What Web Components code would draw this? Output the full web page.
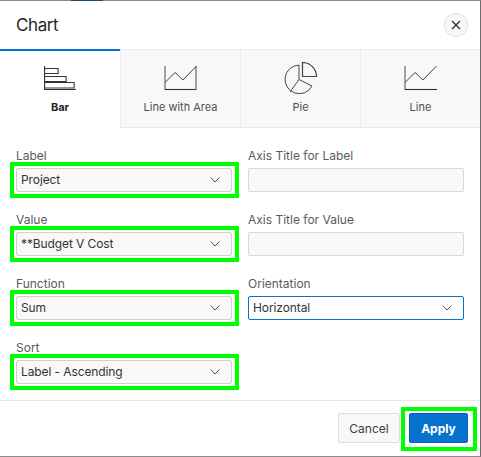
<!DOCTYPE html>
<html>
<head>
<meta charset="utf-8">
<title>Chart</title>
<style>
  html, body { margin: 0; padding: 0; background: #fff; }
  body { font-family: Inter, "Liberation Sans", sans-serif; }
</style>
</head>
<body>
<chart-dialog heading="Chart">
  <chart-tab slot="tabs" label="Bar" active>
    <svg width="34" height="32" viewBox="0 0 34 32" fill="none" stroke="#333" stroke-width="1.1">
      <path d="M.6 4v24M0 27.500h32"/>
      <path d="M.6 6.500h13.500v5H.6M.6 14.500h21.500v5H.6M.6 20.500h29.500v5.500H.6"/>
    </svg>
  </chart-tab>
  <chart-tab slot="tabs" label="Line with Area">
    <svg width="34" height="32" viewBox="0 0 34 32" fill="none">
      <path d="M1 4v24M32 4v24" stroke="#8a8a8a" stroke-width="1.600"/>
      <path d="M1 27.500h31" stroke="#333" stroke-width="1.100"/>
      <path d="M1 20.500l10-10 8 7.500L32.500 4" stroke="#444" stroke-width="1"/>
    </svg>
  </chart-tab>
  <chart-tab slot="tabs" label="Pie">
    <svg width="34" height="32" viewBox="0 0 34 32" fill="none" stroke="#444" stroke-width="1">
      <path d="M15 3.100A14.300 14.300 0 1 0 28 24L15 17.500z"/>
      <path d="M15 17.500L6 30"/>
      <path d="M18.500.500A14 14 0 0 1 32.500 14.500H18.500z" stroke-width="1.200"/>
    </svg>
  </chart-tab>
  <chart-tab slot="tabs" label="Line">
    <svg width="34" height="32" viewBox="0 0 34 32" fill="none">
      <path d="M1 4v24" stroke="#8a8a8a" stroke-width="1.600"/>
      <path d="M1 27.500h32" stroke="#333" stroke-width="1.100"/>
      <path d="M1 20.500l10-10 8 7.500L32.500 4" stroke="#444" stroke-width="1"/>
    </svg>
  </chart-tab>

  <chart-field slot="form" label="Label"><chart-select value="Project" highlight></chart-select></chart-field>
  <chart-field slot="form" label="Axis Title for Label"><chart-input></chart-input></chart-field>
  <chart-field slot="form" label="Value"><chart-select value="**Budget V Cost" highlight></chart-select></chart-field>
  <chart-field slot="form" label="Axis Title for Value"><chart-input></chart-input></chart-field>
  <chart-field slot="form" label="Function"><chart-select value="Sum" highlight></chart-select></chart-field>
  <chart-field slot="form" label="Orientation"><chart-select value="Horizontal" focused></chart-select></chart-field>
  <chart-field slot="form" label="Sort"><chart-select value="Label - Ascending" highlight></chart-select></chart-field>

  <chart-button slot="footer" style="width:62px">Cancel</chart-button>
  <chart-button slot="footer" style="width:59px" primary highlight>Apply</chart-button>
</chart-dialog>

<script>
class ChartDialog extends HTMLElement {
  constructor() {
    super();
    this.attachShadow({ mode: 'open' });
    this.shadowRoot.innerHTML = `
      <style>
        :host {
          display: flex;
          flex-direction: column;
          position: relative;
          box-sizing: border-box;
          width: 481px;
          height: 457px;
          background: #fff;
          border-top: 1px solid #8c8c8c;
          border-bottom: 1px solid #8c8c8c;
          border-right: 1px solid #6e6e6e;
          color: #262626;
        }
        .topmark {
          position: absolute;
          top: -1px;
          left: 71px;
          width: 32px;
          height: 1px;
          background: #1d4a72;
        }
        header {
          display: flex;
          align-items: center;
          justify-content: space-between;
          height: 48px;
          padding: 0 12px 0 16px;
        }
        h1 { margin: 0; font-size: 17px; font-weight: 400; letter-spacing: -.4px; line-height: 24px; }
        .close {
          display: flex;
          align-items: center;
          justify-content: center;
          box-sizing: border-box;
          width: 24px;
          height: 24px;
          border: 1px solid #dedede;
          border-radius: 50%;
          background: #f8f8f8;
        }
        .tabs { display: grid; grid-template-columns: repeat(4, 120px); }
        .form {
          display: grid;
          grid-template-columns: 216px 216px;
          column-gap: 16px;
          row-gap: 20px;
          padding: 20px 16px 16px;
        }
        footer {
          display: flex;
          justify-content: flex-end;
          gap: 9px;
          flex: 1;
          padding: 12px 12px 0 0;
          border-top: 1px solid #e8e8e8;
        }
      </style>
      <div class="topmark"></div>
      <header>
        <h1></h1>
        <div class="close">
          <svg width="10" height="10" viewBox="0 0 10 10" fill="none" stroke="#333" stroke-width="1.4">
            <path d="M1 1l8 8M9 1l-8 8"/>
          </svg>
        </div>
      </header>
      <div class="tabs"><slot name="tabs"></slot></div>
      <div class="form"><slot name="form"></slot></div>
      <footer><slot name="footer"></slot></footer>
    `;
    this.shadowRoot.querySelector('h1').textContent = this.getAttribute('heading');
  }
}

class ChartTab extends HTMLElement {
  constructor() {
    super();
    this.attachShadow({ mode: 'open' });
    this.shadowRoot.innerHTML = `
      <style>
        :host {
          display: flex;
          flex-direction: column;
          align-items: center;
          box-sizing: border-box;
          height: 79px;
          padding-top: 12px;
          background: #f8f8f8;
          border-top: 1px solid #ececec;
          border-bottom: 1px solid #e6e6e6;
          border-left: 1px solid #ececec;
          color: #505050;
          font-size: 11px;
          line-height: 16px;
        }
        :host([active]) {
          padding-top: 11px;
          background: #fff;
          border-top: 2px solid #0572ce;
          border-bottom: 0;
          border-left: 0;
          color: #262626;
          font-weight: 700;
        }
        ::slotted(svg) { display: block; margin-left: 1px; }
        :host([active]) ::slotted(svg) { margin-left: 2px; }
        span { margin-top: 5px; }
      </style>
      <slot></slot>
      <span></span>
    `;
    this.shadowRoot.querySelector('span').textContent = this.getAttribute('label');
  }
}

class ChartField extends HTMLElement {
  constructor() {
    super();
    this.attachShadow({ mode: 'open' });
    this.shadowRoot.innerHTML = `
      <style>
        :host { display: block; }
        label {
          display: block;
          height: 16px;
          margin-bottom: 4px;
          color: #5a5a5a;
          font-size: 12px;
          line-height: 16px;
        }
      </style>
      <label></label>
      <slot></slot>
    `;
    this.shadowRoot.querySelector('label').textContent = this.getAttribute('label');
  }
}

class ChartSelect extends HTMLElement {
  constructor() {
    super();
    this.attachShadow({ mode: 'open' });
    this.shadowRoot.innerHTML = `
      <style>
        :host {
          display: flex;
          align-items: center;
          justify-content: space-between;
          position: relative;
          box-sizing: border-box;
          height: 24px;
          padding: 0 11px 0 4px;
          background: #f8f8f8;
          border: 1px solid #d0d0d0;
          border-radius: 2px;
          color: #333;
          font-size: 12px;
        }
        :host([focused]) { background: #fff; border-color: #0572ce; }
        :host([highlight])::after {
          content: "";
          position: absolute;
          top: -7px;
          left: -7px;
          right: -8px;
          bottom: -7px;
          border: 4px solid #00ff00;
        }
        span { margin-bottom: 1px; letter-spacing: -.1px; }
        svg { display: block; }
      </style>
      <span></span>
      <svg width="10" height="6" viewBox="0 0 10 6" fill="none" stroke="#505050" stroke-width="1">
        <path d="M.5 .5L5 5l4.500-4.500"/>
      </svg>
    `;
    this.shadowRoot.querySelector('span').textContent = this.getAttribute('value');
  }
}

class ChartInput extends HTMLElement {
  constructor() {
    super();
    this.attachShadow({ mode: 'open' });
    this.shadowRoot.innerHTML = `
      <style>
        :host {
          display: block;
          box-sizing: border-box;
          height: 24px;
          background: #f8f8f8;
          border: 1px solid #d8d8d8;
          border-radius: 2px;
        }
      </style>
    `;
  }
}

class ChartButton extends HTMLElement {
  constructor() {
    super();
    this.attachShadow({ mode: 'open' });
    this.shadowRoot.innerHTML = `
      <style>
        :host {
          display: flex;
          align-items: center;
          justify-content: center;
          position: relative;
          box-sizing: border-box;
          height: 30px;
          background: #f8f8f8;
          border: 1px solid #dcdcdc;
          border-radius: 2px;
          color: #404040;
          font-size: 12px;
        }
        :host([primary]) {
          background: #0572ce;
          border-color: #0562b4;
          color: #fff;
          font-weight: 700;
        }
        :host([highlight])::after {
          content: "";
          position: absolute;
          top: -7px;
          left: -9px;
          right: -10px;
          bottom: -9px;
          border: 4px solid #00ff00;
        }
      </style>
      <slot></slot>
    `;
  }
}

customElements.define('chart-dialog', ChartDialog);
customElements.define('chart-tab', ChartTab);
customElements.define('chart-field', ChartField);
customElements.define('chart-select', ChartSelect);
customElements.define('chart-input', ChartInput);
customElements.define('chart-button', ChartButton);
</script>
</body>
</html>
